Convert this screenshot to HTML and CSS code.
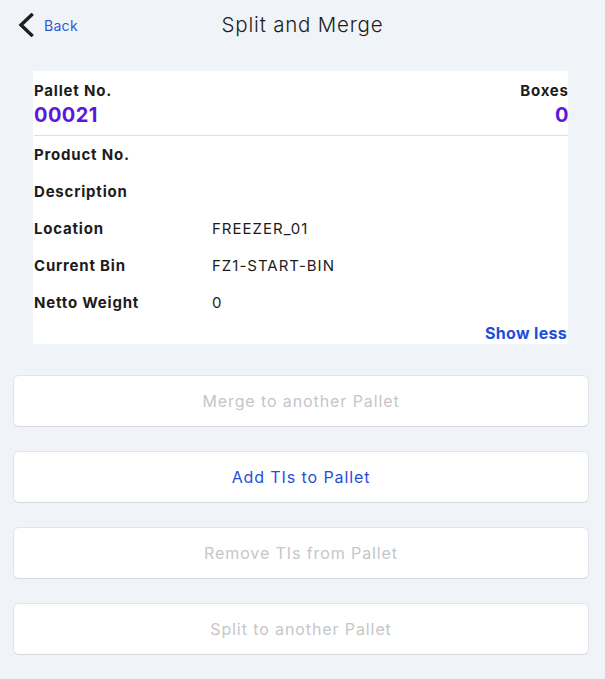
FILE: index.html
```html
<!DOCTYPE html>
<html>
<head>
<meta charset="utf-8">
<link rel="stylesheet" href="styles.css">
</head>
<body>
<div class="page">
  <header class="topbar">
    <a class="back">
      <svg class="chev" width="16" height="24" viewBox="0 0 16 24"><path d="M13.5 2 L3 12 L13.5 22" fill="none" stroke="#1e1e1e" stroke-width="3.4" stroke-linecap="square" stroke-linejoin="miter"/></svg>
      <span class="back-text">Back</span>
    </a>
    <h1 class="title">Split and Merge</h1>
  </header>

  <section class="card">
    <div class="card-head">
      <div class="head-col">
        <div class="label">Pallet No.</div>
        <div class="big">00021</div>
      </div>
      <div class="head-col right">
        <div class="label">Boxes</div>
        <div class="big">0</div>
      </div>
    </div>
    <div class="rows">
      <div class="row"><span class="label k">Product No.</span><span class="v"></span></div>
      <div class="row"><span class="label k">Description</span><span class="v"></span></div>
      <div class="row"><span class="label k">Location</span><span class="v">FREEZER_01</span></div>
      <div class="row"><span class="label k">Current Bin</span><span class="v">FZ1-START-BIN</span></div>
      <div class="row"><span class="label k">Netto Weight</span><span class="v">0</span></div>
    </div>
    <div class="more"><span class="show-less">Show less</span></div>
  </section>

  <div class="actions">
    <button class="btn disabled">Merge to another Pallet</button>
    <button class="btn active">Add TIs to Pallet</button>
    <button class="btn disabled">Remove TIs from Pallet</button>
    <button class="btn disabled">Split to another Pallet</button>
  </div>
</div>
</body>
</html>
```

FILE: styles.css
```css
* { box-sizing: border-box; }
html, body {
  margin: 0;
  padding: 0;
  background: #f0f3f7;
  font-family: "Inter", "Liberation Sans", sans-serif;
  color: #1c1c1c;
}
.page {
  width: 605px;
  padding: 0 17px 0 13px;
}
.topbar {
  position: relative;
  height: 50px;
  display: flex;
  align-items: center;
}
.back {
  display: flex;
  align-items: center;
  gap: 10px;
  padding-left: 5px;
}
.chev { display: block; }
.back-text {
  color: #2a5bd7;
  font-size: 14px;
  letter-spacing: 0.3px;
}
.title {
  position: absolute;
  left: 0;
  right: 0;
  top: 12px;
  margin: 0 auto;
  text-align: center;
  font-size: 20.5px;
  font-weight: 300;
  letter-spacing: 0.8px;
  color: #1c1c1c;
  padding-left: 4px;
  pointer-events: none;
}
.card {
  background: #fff;
  margin: 21px 20px 0 20px;
  padding: 11px 0 1px 1px;
}
.card-head {
  display: flex;
  justify-content: space-between;
  border-bottom: 1px solid #cfe2fa;
  padding-bottom: 7px;
}
.head-col.right { text-align: right; }
.head-col.right .label,
.head-col.right .big { margin-right: -0.8px; }
.label {
  font-size: 15px;
  font-weight: 700;
  color: #1c1c1c;
  line-height: 18px;
  letter-spacing: 0.8px;
}
.big {
  margin-top: 2px;
  font-size: 20px;
  font-weight: 700;
  color: #5a17dd;
  line-height: 26px;
  letter-spacing: 0.4px;
}
.row {
  display: flex;
  align-items: center;
  height: 37px;
}
.k { width: 178px; }
.v {
  font-size: 15px;
  color: #1c1c1c;
  letter-spacing: 1px;
}
.more {
  display: flex;
  justify-content: flex-end;
  padding: 2px 1px 0 0;
}
.show-less {
  color: #1d4fd8;
  font-weight: 700;
  font-size: 16px;
  line-height: 20px;
  letter-spacing: 0.3px;
}
.actions {
  display: flex;
  flex-direction: column;
  gap: 24px;
  margin-top: 31px;
}
.btn {
  width: 576px;
  height: 52px;
  background: #fff;
  border: 1px solid #e1e5ea;
  border-bottom-color: #d6dade;
  border-radius: 6px;
  font-family: inherit;
  font-size: 16px;
  letter-spacing: 0.9px;
  cursor: pointer;
}
.btn.disabled { color: #c6c6c8; }
.btn.active { color: #1f4fd6; }
```
